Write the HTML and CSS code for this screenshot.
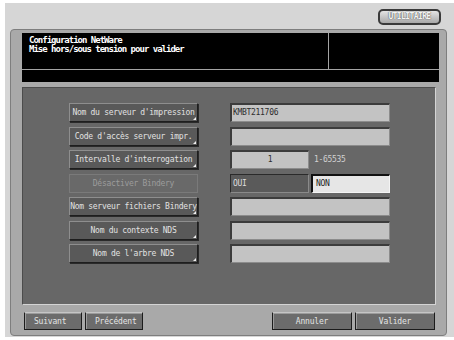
FILE: index.html
```html
<!DOCTYPE html>
<html lang="fr">
<head>
    <meta charset="UTF-8">
    <title>Configuration NetWare</title>
    <link rel="stylesheet" href="styles.css">
</head>
<body>
    <div class="screen">
        <div class="topbar">
            <div class="utility">UTILITAIRE</div>
        </div>

        <div class="frame">
            <div class="header">
                <div class="cell msg">Configuration NetWare<br>Mise hors/sous tension pour valider</div>
                <div class="cell"></div>
                <div class="cell wide"></div>
            </div>

            <div class="panel">
                <div class="row">
                    <button class="key">Nom du serveur d'impression</button>
                    <div class="field">KMBT211706</div>
                </div>
                <div class="row">
                    <button class="key">Code d'accès serveur impr.</button>
                    <div class="field"></div>
                </div>
                <div class="row">
                    <button class="key">Intervalle d'interrogation</button>
                    <div class="split">
                        <div class="field center">1</div>
                        <span class="range">1-65535</span>
                    </div>
                </div>
                <div class="row">
                    <button class="key off">Désactiver Bindery</button>
                    <div class="split">
                        <button class="opt">OUI</button>
                        <button class="opt on">NON</button>
                    </div>
                </div>
                <div class="row">
                    <button class="key">Nom serveur fichiers Bindery</button>
                    <div class="field"></div>
                </div>
                <div class="row">
                    <button class="key">Nom du contexte NDS</button>
                    <div class="field"></div>
                </div>
                <div class="row">
                    <button class="key">Nom de l'arbre NDS</button>
                    <div class="field"></div>
                </div>
            </div>

            <div class="bottom">
                <div class="group">
                    <button class="nav small">Suivant</button>
                    <button class="nav small">Précédent</button>
                </div>
                <div class="group">
                    <button class="nav">Annuler</button>
                    <button class="nav">Valider</button>
                </div>
            </div>
        </div>
    </div>
</body>
</html>
```

FILE: styles.css
```css
/* Panneau de configuration */
body {
    margin: 0;
    background: #fff;
    font-family: "DejaVu Sans Mono", monospace;
}

button {
    font-family: inherit;
    margin: 0;
    padding: 0;
}

.screen {
    margin: 3px 0 0 5px;
    height: 334px;
    box-sizing: border-box;
    background: #d6d6d6;
    padding: 6px 13px 0 5px;
    display: flex;
    flex-direction: column;
}

.topbar {
    display: flex;
    justify-content: flex-end;
    height: 16px;
    margin-bottom: 4px;
}

.utility {
    width: 63px;
    height: 16px;
    box-sizing: border-box;
    border: 2px solid #3a3a3a;
    border-radius: 5px;
    background: linear-gradient(#e4e4e4, #a8a8a8);
    color: #f4f4f4;
    font-size: 8px;
    font-weight: bold;
    line-height: 12px;
    text-align: center;
    letter-spacing: -0.6px;
    text-shadow: 0 0 1px #555, 0 0 1px #555;
}

.frame {
    width: 437px;
    height: 307px;
    box-sizing: border-box;
    background: #a9a9a9;
    border: 1px solid #7e7e7e;
    border-radius: 4px;
    padding: 3px 7px 0 11px;
    display: flex;
    flex-direction: column;
}

.header {
    display: grid;
    grid-template-columns: 306px 1fr;
    grid-template-rows: 36px 12px;
    gap: 1px;
    background: #a4a4a4;
}

.cell {
    background: #000;
}

.cell.wide {
    grid-column: 1 / 3;
}

.msg {
    color: #fff;
    font-size: 9px;
    font-weight: bold;
    line-height: 9px;
    letter-spacing: -1px;
    padding: 3px 0 0 7px;
}

.panel {
    margin-top: 5px;
    width: 414px;
    height: 218px;
    box-sizing: border-box;
    background: #676767;
    border: 1px solid;
    border-color: #4c4c4c #d4d4d4 #d4d4d4 #4c4c4c;
    padding: 15px 0 0 46px;
    display: flex;
    flex-direction: column;
    gap: 4.5px;
}

.row {
    display: grid;
    grid-template-columns: 129px 160px;
    column-gap: 32px;
    height: 19px;
}

.key {
    position: relative;
    background: #595959;
    border: 1px solid;
    border-color: #8e8e8e #1e1e1e #1e1e1e #8e8e8e;
    box-shadow: 1px 1px 0 #2a2a2a;
    color: #e2e2e2;
    font-size: 8px;
    letter-spacing: -0.3px;
    white-space: nowrap;
    overflow: hidden;
}

.key::after {
    content: "";
    position: absolute;
    right: 1px;
    bottom: 1px;
    border-style: solid;
    border-width: 0 0 3px 3px;
    border-color: transparent transparent #f0f0f0 transparent;
}

.key.off {
    background: #696969;
    border-color: #7a7a7a;
    box-shadow: none;
    color: #9c9c9c;
}

.key.off::after {
    display: none;
}

.field {
    background: #c3c3c3;
    border: 1px solid;
    border-color: #3c3c3c #8c8c8c #8c8c8c #3c3c3c;
    border-width: 2px 1px 1px 2px;
    color: #2e2e2e;
    font-size: 8px;
    letter-spacing: -0.3px;
    line-height: 15px;
    padding-left: 1px;
}

.field.center {
    text-align: center;
    padding: 0;
}

.split {
    display: grid;
    grid-template-columns: 79px 79px;
    column-gap: 2px;
}

.range {
    color: #d2d2d2;
    font-size: 8px;
    letter-spacing: -0.3px;
    line-height: 19px;
    padding-left: 3px;
}

.opt {
    background: #5a5a5a;
    border: 1px solid;
    border-color: #2a2a2a #8a8a8a #8a8a8a #2a2a2a;
    color: #dcdcdc;
    font-size: 8px;
    letter-spacing: -0.3px;
    text-align: left;
    padding-left: 2px;
}

.opt.on {
    background: #e6e6e6;
    border-width: 2px 1px 1px 2px;
    border-color: #111 #f4f4f4 #f4f4f4 #111;
    color: #222;
    padding-left: 3px;
}

.bottom {
    margin-top: 7px;
    display: flex;
    justify-content: space-between;
    padding: 0 4px 0 2px;
}

.group {
    display: flex;
    gap: 3px;
}

.nav {
    width: 80px;
    height: 18px;
    background: #6c6c6c;
    border: 1px solid;
    border-color: #c6c6c6 #1c1c1c #1c1c1c #1c1c1c;
    box-shadow: inset 1px 1px 0 #9c9c9c;
    color: #e4e4e4;
    font-size: 8px;
    letter-spacing: -0.2px;
}

.nav.small {
    width: 58px;
    text-align: left;
    padding-left: 9px;
}
```
